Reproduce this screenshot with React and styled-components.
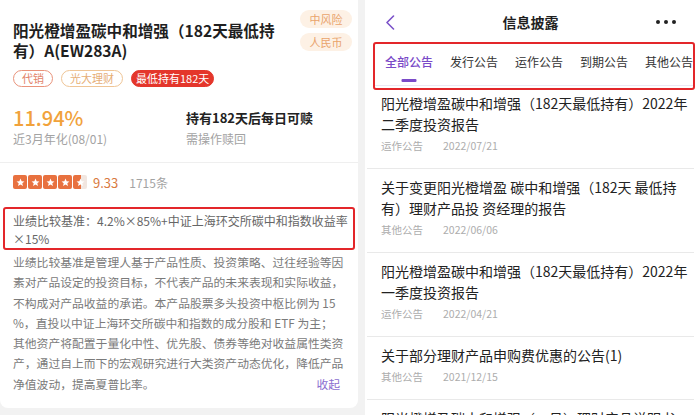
import React from "react";
import styled, { createGlobalStyle } from "styled-components";

const GlobalStyle = createGlobalStyle`
  html, body { margin: 0; padding: 0; background: #f2f2f2; }
  body { font-family: "Noto Sans CJK SC", "Noto Sans", sans-serif; color: #222; }
`;

const Page = styled.div`
  display: flex;
  gap: 7px;
  width: 700px;
  height: 415px;
  overflow: hidden;
  background: #f2f2f2;
`;

/* ---------- left product card ---------- */
const ProductCard = styled.section`
  width: 358px;
  height: 408px;
  box-sizing: border-box;
  background: #fff;
  border-radius: 0 0 8px 8px;
  padding: 0 13px;
  display: flex;
  flex-direction: column;
`;

const HeaderRow = styled.div`
  display: flex;
  justify-content: space-between;
  align-items: flex-start;
  padding-top: 10px;
`;

const ProductTitle = styled.h1`
  margin: 10px 0 0;
  width: 268px;
  font-size: 15.6px;
  line-height: 20px;
  font-weight: 700;
  color: #1f1f1f;
`;

const RiskColumn = styled.div`
  display: flex;
  flex-direction: column;
  gap: 5px;
  margin-right: -7px;
`;

const RiskTag = styled.span`
  width: 52px;
  height: 18px;
  border-radius: 9px;
  background: #fdf1e5;
  color: #e9a46c;
  font-size: 11px;
  line-height: 18px;
  text-align: center;
`;

const TagRow = styled.div`
  display: flex;
  gap: 8px;
  margin-top: 10px;
`;

const tagStyles = {
  agent: "border: 1px solid #e9937b; color: #e2836a; background: #fff; padding: 0 8px;",
  brand: "border: 1px solid #efc596; color: #e6ae76; background: #fff; padding: 0 8px;",
  hold: "border: 1px solid #e4362b; color: #fff; background: #e4362b; padding: 0 4px;",
};

const Tag = styled.span`
  box-sizing: border-box;
  height: 17px;
  border-radius: 9px;
  font-size: 11px;
  line-height: 15px;
  ${(p) => tagStyles[p.$variant]}
`;

const StatsRow = styled.div`
  display: grid;
  grid-template-columns: 173px 1fr;
  margin: 19px -13px 0;
  padding: 0 13px 15px;
  border-bottom: 1px solid #efefef;
`;

const Stat = styled.div`
  display: flex;
  flex-direction: column;
`;

const Rate = styled.div`
  font-size: 20px;
  line-height: 24px;
  font-weight: 500;
  color: #f1a23b;
`;

const HoldText = styled.div`
  font-size: 13px;
  line-height: 24px;
  font-weight: 700;
  color: #222;
`;

const StatLabel = styled.div`
  margin-top: 1px;
  font-size: 12px;
  line-height: 16px;
  color: #a3a3a3;
`;

const RatingRow = styled.div`
  display: flex;
  align-items: center;
  margin-top: 12px;
  height: 14px;
`;

const Stars = styled.div`
  display: flex;
  gap: 1px;
`;

const StarBox = styled.span`
  width: 14px;
  height: 14px;
  border-radius: 2px;
  display: flex;
  align-items: center;
  justify-content: center;
  background: ${(p) =>
    p.$half ? "linear-gradient(90deg, #e8713f 55%, #f1e6e0 55%)" : "#e8713f"};
`;

const Score = styled.span`
  margin-left: 6px;
  font-size: 13px;
  color: #d97a40;
`;

const Count = styled.span`
  margin-left: 11px;
  font-size: 12px;
  color: #a3a3a3;
`;

const BenchmarkBox = styled.div`
  margin: 18px -10px 0;
  padding: 3px 8px 0;
  border: 2px solid #e3262a;
  border-radius: 3px;
  font-size: 12px;
  line-height: 18px;
  color: #666;
`;

const Paragraph = styled.div`
  margin-top: 2px;
  font-size: 11.8px;
  line-height: 20.3px;
  color: #7a7a7a;
`;

const Line = styled.div`
  white-space: nowrap;
  display: flex;
  justify-content: space-between;
`;

const Collapse = styled.span`
  color: #8b6fd0;
  margin-right: 5px;
`;

/* ---------- right disclosure panel ---------- */
const Panel = styled.section`
  flex: 1;
  background: #fff;
  display: flex;
  flex-direction: column;
  overflow: hidden;
`;

const NavBar = styled.div`
  height: 44px;
  flex: none;
  display: grid;
  grid-template-columns: 1fr auto 1fr;
  align-items: center;
  padding: 0 24px 0 20px;
`;

const NavTitle = styled.div`
  font-size: 14px;
  font-weight: 700;
  color: #1f1f1f;
`;

const Dots = styled.div`
  justify-self: end;
  display: flex;
  gap: 4px;
  span {
    width: 4px;
    height: 4px;
    border-radius: 50%;
    background: #222;
  }
`;

const TabBox = styled.div`
  margin: -2px 5px 0 8px;
  padding-bottom: 2px;
  border: 2px solid #e3262a;
  border-radius: 3px;
`;

const TabBar = styled.div`
  display: flex;
  gap: 17px;
  height: 41px;
  padding-left: 10px;
  border-bottom: 1px solid #ece8f4;
`;

const Tab = styled.div`
  position: relative;
  padding-top: 10px;
  font-size: 12px;
  line-height: 16px;
  white-space: nowrap;
  color: ${(p) => (p.$active ? "#7a4bc8" : "#333")};
  font-weight: ${(p) => (p.$active ? 500 : 400)};
`;

const Underline = styled.span`
  position: absolute;
  top: 35px;
  left: 50%;
  transform: translateX(-50%);
  width: 15px;
  height: 3px;
  border-radius: 1px;
  background: #7a4bc8;
`;

const List = styled.div`
  margin: 0 6px 0 2px;
`;

const Item = styled.div`
  padding: 8px 14px 14px;
  border-bottom: 1px solid #e9e9e9;
  &:first-child {
    padding-top: 2.5px;
  }
`;

const ItemTitle = styled.div`
  font-size: 14px;
  line-height: 21px;
  color: #222;
  white-space: nowrap;
`;

const TitleLine = styled.span`
  display: block;
`;

const Meta = styled.div`
  margin-top: 3px;
  display: flex;
  gap: 20px;
  font-size: 10.5px;
  line-height: 16px;
  color: #adadad;
`;

const StarIcon = () => (
  <svg width="9" height="9" viewBox="0 0 10 10">
    <polygon
      fill="#fff"
      points="5,0.6 6.25,3.5 9.4,3.75 7,5.8 7.75,8.9 5,7.25 2.25,8.9 3,5.8 0.6,3.75 3.75,3.5"
    />
  </svg>
);

const Chevron = () => (
  <svg width="10" height="15" viewBox="0 0 10 15">
    <polyline points="8.5,1 2,7.5 8.5,14" fill="none" stroke="#7b52c9" strokeWidth="1.6" strokeLinecap="round" strokeLinejoin="round" />
  </svg>
);

const paragraphLines = [
  "业绩比较基准是管理人基于产品性质、投资策略、过往经验等因",
  "素对产品设定的投资目标，不代表产品的未来表现和实际收益，",
  "不构成对产品收益的承诺。本产品股票多头投资中枢比例为 15",
  "%，直投以中证上海环交所碳中和指数的成分股和 ETF 为主；",
  "其他资产将配置于量化中性、优先股、债券等绝对收益属性类资",
  "产，通过自上而下的宏观研究进行大类资产动态优化，降低产品",
];

const tabs = ["全部公告", "发行公告", "运作公告", "到期公告", "其他公告"];

const notices = [
  {
    lines: ["阳光橙增盈碳中和增强（182天最低持有）2022年", "二季度投资报告"],
    type: "运作公告",
    date: "2022/07/21",
  },
  {
    lines: ["关于变更阳光橙增盈 碳中和增强（182天 最低持", "有）理财产品投 资经理的报告"],
    type: "其他公告",
    date: "2022/06/06",
  },
  {
    lines: ["阳光橙增盈碳中和增强（182天最低持有）2022年", "一季度投资报告"],
    type: "运作公告",
    date: "2022/04/21",
  },
  {
    lines: ["关于部分理财产品申购费优惠的公告(1)"],
    type: "其他公告",
    date: "2021/12/15",
  },
  {
    lines: ["阳光橙增盈碳中和增强（一号）理财产品说明书"],
    type: "发行公告",
    date: "2021/11/30",
  },
];

export default function App() {
  return (
    <>
      <GlobalStyle />
      <Page>
        <ProductCard>
          <HeaderRow>
            <ProductTitle>阳光橙增盈碳中和增强（182天最低持有）A(EW283A)</ProductTitle>
            <RiskColumn>
              <RiskTag>中风险</RiskTag>
              <RiskTag>人民币</RiskTag>
            </RiskColumn>
          </HeaderRow>
          <TagRow>
            <Tag $variant="agent">代销</Tag>
            <Tag $variant="brand">光大理财</Tag>
            <Tag $variant="hold">最低持有182天</Tag>
          </TagRow>
          <StatsRow>
            <Stat>
              <Rate>11.94%</Rate>
              <StatLabel>近3月年化(08/01)</StatLabel>
            </Stat>
            <Stat>
              <HoldText>持有182天后每日可赎</HoldText>
              <StatLabel>需操作赎回</StatLabel>
            </Stat>
          </StatsRow>
          <RatingRow>
            <Stars>
              {[0, 1, 2, 3, 4].map((i) => (
                <StarBox key={i} $half={i === 4}>
                  <StarIcon />
                </StarBox>
              ))}
            </Stars>
            <Score>9.33</Score>
            <Count>1715条</Count>
          </RatingRow>
          <BenchmarkBox>
            <Line>业绩比较基准：4.2%×85%+中证上海环交所碳中和指数收益率</Line>
            <Line>×15%</Line>
          </BenchmarkBox>
          <Paragraph>
            {paragraphLines.map((l) => (
              <Line key={l}>{l}</Line>
            ))}
            <Line>
              <span>净值波动，提高夏普比率。</span>
              <Collapse>收起</Collapse>
            </Line>
          </Paragraph>
        </ProductCard>

        <Panel>
          <NavBar>
            <Chevron />
            <NavTitle>信息披露</NavTitle>
            <Dots>
              <span />
              <span />
              <span />
            </Dots>
          </NavBar>
          <TabBox>
            <TabBar>
              {tabs.map((t, i) => (
                <Tab key={t} $active={i === 0}>
                  {t}
                  {i === 0 && <Underline />}
                </Tab>
              ))}
            </TabBar>
          </TabBox>
          <List>
            {notices.map((n, i) => (
              <Item key={i}>
                <ItemTitle>
                  {n.lines.map((l) => (
                    <TitleLine key={l}>{l}</TitleLine>
                  ))}
                </ItemTitle>
                <Meta>
                  <span>{n.type}</span>
                  <span>{n.date}</span>
                </Meta>
              </Item>
            ))}
          </List>
        </Panel>
      </Page>
    </>
  );
}
